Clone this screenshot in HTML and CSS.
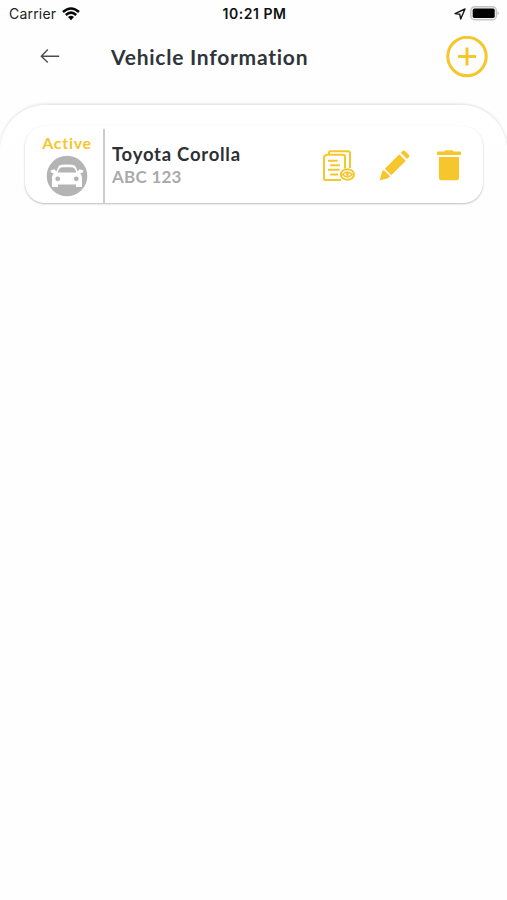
FILE: index.html
```html
<!DOCTYPE html>
<html lang="en">
<head>
<meta charset="utf-8">
<title>Vehicle Information</title>
<link rel="stylesheet" href="styles.css">
</head>
<body>
<div class="status">
  <div class="carrier"><span>Carrier</span>
    <svg width="18" height="14" viewBox="0 0 18 14" fill="none" stroke="#080808" stroke-width="2.5"><path d="M1 5Q9-2 17 5M3.8 8Q9 3.3 14.2 8"/><path d="M6 10.1Q9 7.4 12 10.1L9 13.2Z" fill="#080808" stroke="none"/></svg>
  </div>
  <div class="time">10:21 PM</div>
  <div class="indicators">
    <svg width="12" height="12" viewBox="0 0 12 12" fill="none" stroke="#181818" stroke-width="1.4" stroke-linejoin="round"><path d="M1 5.6 11 1 6.7 11 5.8 6.3Z"/></svg>
    <svg width="30" height="15" viewBox="0 0 30 15"><rect x=".8" y=".8" width="25.6" height="12.9" rx="3.8" fill="#f4f4f4" stroke="#c4c4c4" stroke-width="1.4"/><rect x="2.7" y="2.6" width="22" height="9.3" rx="1.6"/><path d="M27.6 5.2Q30 7.2 27.6 9.3Z" fill="#aaa"/></svg>
  </div>
</div>
<header class="header">
  <svg class="back" width="20" height="16" viewBox="0 0 20 16" fill="none" stroke="#4c4c4c" stroke-width="1.4"><path d="M19.2 8.2H1.5M7.8 1.6 1.3 8.2 7.8 14.6"/></svg>
  <h1>Vehicle Information</h1>
  <svg class="add" width="42" height="42" viewBox="0 0 42 42" fill="none" stroke="#f6c62d"><circle cx="21" cy="20.5" r="19.2" stroke-width="3"/><path d="M21 11.5V29.5M12 20.5H30" stroke-width="3"/></svg>
</header>
<main class="sheet">
  <article class="card">
    <div class="state">
      <span class="active">Active</span>
      <svg width="42" height="42" viewBox="0 0 42 42"><circle cx="21" cy="21" r="20.3" fill="#b4b4b4"/><path fill="#fff" d="M4.5 15.6 8.5 14.2 10.2 16.5 12.5 11.5Q13.3 10 16 9.7Q21 9.2 26 9.7Q28.7 10 29.5 11.5L31.8 16.5 33.5 14.2 37.5 15.6 36.8 17.5 34.2 18.4Q36 20.3 36 22.5V32H30V29.4H12V32H6V22.5Q6 20.3 7.8 18.4L5.2 17.5Z"/><path fill="#b4b4b4" d="M11.8 17.4Q13 12.3 17 12.3H25Q29 12.3 30.2 17.4Z"/><circle cx="11.7" cy="23.8" r="2.4" fill="#b4b4b4"/><circle cx="30.3" cy="23.8" r="2.4" fill="#b4b4b4"/></svg>
    </div>
    <div class="vehicle"><h2>Toyota Corolla</h2><p>ABC 123</p></div>
    <div class="actions">
      <svg width="32" height="32" viewBox="0 0 32 32" fill="none" stroke="#f6c62d" stroke-width="2"><path d="M18 30H2.6Q1 30 1 28.4V6.8L3.2 4.7H20Q22 4.7 22 6.7V18.5M6 4.5V2.6Q6 1.2 7.4 1.2H25Q27 1.2 27 3.2V18M5 10.7H14.6M7.2 15.2H17M5 19.8H16.5M7.2 24.4H15"/><ellipse cx="24.4" cy="24.5" rx="6.6" ry="5.3"/><path d="M19.5 24.5Q24.4 19.8 29.3 24.5Q24.4 29.2 19.5 24.5Z" stroke-width="1.5"/><circle cx="24.4" cy="24.5" r="1.4" fill="#f6c62d" stroke="none"/></svg>
      <svg width="31" height="31" viewBox="0 0 31 31" fill="#f6c62d"><path d="M20.3 4.2 26.8 10.7 12.3 25.2 5.8 18.7ZM4.8 19.9 11.1 26.2 9.3 28 .6 30.4 3 21.7ZM21.7 2.8 23.8.8Q24.8 0 25.8.8L30.1 5.1Q31 6 30.1 6.9L28 9.1Z"/></svg>
      <svg width="24" height="31" viewBox="0 0 24 31" fill="#f6c62d"><path d="M0 2.2Q0 1.4 1 1.4H7.2L8.6.2H15.4L16.8 1.4H23Q24 1.4 24 2.2V5H0ZM1.9 6.9H22.1V27.2Q22.1 30.3 19.4 30.3H4.6Q1.9 30.3 1.9 27.2Z"/></svg>
    </div>
  </article>
</main>
</body>
</html>
```
FILE: styles.css
```css
* { box-sizing: border-box; }
body { margin: 0; min-height: 900px; background: #fefefe; font-family: Lato, sans-serif; overflow: hidden; }
svg { display: block; flex: none; }
h1, h2, p { margin: 0; white-space: nowrap; }
.status { height: 28px; display: grid; grid-template-columns: 1fr auto 1fr; align-items: center; padding: 0 7px 1px 9px; font-family: Inter, sans-serif; font-size: 14px; color: #222; }
.carrier { display: flex; align-items: center; gap: 6px; letter-spacing: .2px; }
.time { font-weight: 600; font-size: 14px; color: #111; letter-spacing: .55px; }
.indicators { display: flex; justify-content: flex-end; align-items: center; gap: 4px; }
.header { height: 77px; display: flex; align-items: flex-start; padding: 8px 19px 0 40px; }
.back { margin-top: 12px; }
h1 { margin-left: 51px; font-size: 21px; line-height: 41px; font-weight: 700; color: #30353b; letter-spacing: .75px; }
.add { margin-left: auto; }
.sheet { height: 795px; padding: 21px 24px 0 25px; border-radius: 46px 46px 0 0; background: linear-gradient(#fff, #fefefe 90px); box-shadow: 0 -1px 3px #dedede; clip-path: polygon(-5px -5px, 512px -5px, 512px 40px, 507px 40px, 507px 795px, 0 795px, 0 40px, -5px 40px); }
.card { height: 77px; display: flex; border-radius: 20px; background: #fff; box-shadow: 0 1px 2px #bdbdbd; }
.state { width: 80px; padding: 6px 0 0 6px; border-right: 2px solid #ccc; display: flex; flex-direction: column; align-items: center; margin-top: 3px; }
.active { color: #f6c62d; font-size: 16px; font-weight: 700; line-height: 16px; letter-spacing: .7px; }
.state svg { margin-top: 4px; }
.vehicle { padding: 17px 0 0 7px; }
h2 { font-size: 18.5px; line-height: 23px; color: #2d3136; letter-spacing: .75px; }
p { font-size: 17px; line-height: 21px; font-weight: 700; color: #aaa; letter-spacing: .25px; }
.actions { margin-left: auto; padding: 24px 22px 0 0; display: flex; align-items: flex-start; gap: 24px; }
.actions svg:last-child { margin-left: 3px; }
```
